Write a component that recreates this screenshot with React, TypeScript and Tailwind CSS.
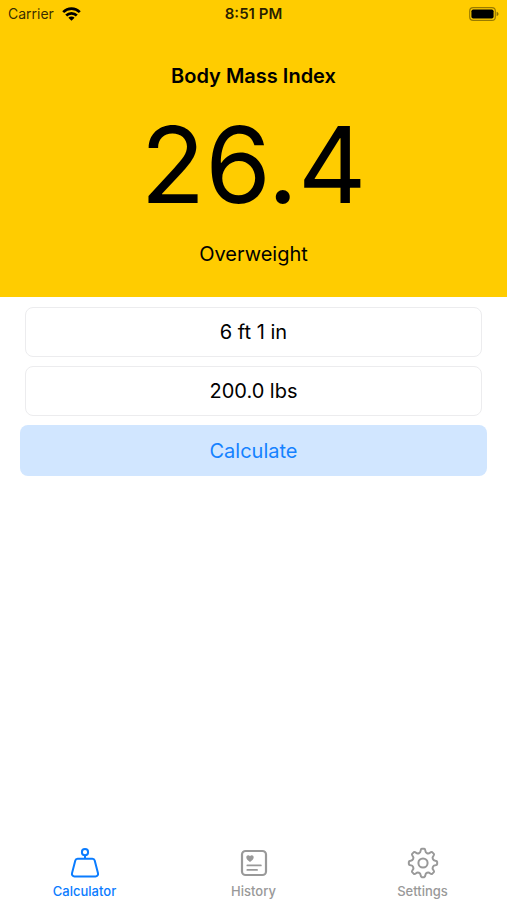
import React, { useState } from 'react';

type TabId = 'calculator' | 'history' | 'settings';

const WifiIcon = () => (
  <svg width="19" height="14" viewBox="0 0 19 14" fill="none" stroke="currentColor" strokeWidth="2.7" aria-hidden="true">
    <path d="M1.2 5.1a11.8 11.8 0 0 1 16.6 0" />
    <path d="M4.2 8.5a7.5 7.5 0 0 1 10.6 0" />
    <path d="M9.5 13.7 6.4 10.7a4.4 4.4 0 0 1 6.2 0Z" fill="currentColor" stroke="none" />
  </svg>
);

const BatteryIcon = () => (
  <svg width="30" height="14" viewBox="0 0 30 14" aria-hidden="true">
    <rect x="0.7" y="0.7" width="25.6" height="12.6" rx="3.4" fill="none" stroke="currentColor" strokeOpacity="0.4" strokeWidth="1.2" />
    <rect x="2.4" y="2.4" width="22.2" height="9.2" rx="1.8" fill="currentColor" />
    <path d="M27.6 4.8c1.2.4 1.9 1.2 1.9 2.2s-.7 1.8-1.9 2.2Z" fill="currentColor" fillOpacity="0.45" />
  </svg>
);

const WeightIcon = () => (
  <svg width="36" height="36" viewBox="0 0 36 36" fill="none" stroke="currentColor" strokeWidth="2" strokeLinejoin="round" aria-hidden="true">
    <circle cx="18" cy="7.2" r="3.1" />
    <path d="M18 10.3v3.4" />
    <path d="M10.6 13.8h14.8a2.4 2.4 0 0 1 2.3 1.8l3.3 12.6a2.6 2.6 0 0 1-2.5 3.3h-21A2.6 2.6 0 0 1 5 28.2l3.3-12.6a2.4 2.4 0 0 1 2.3-1.8Z" />
  </svg>
);

const HistoryIcon = () => (
  <svg width="36" height="36" viewBox="0 0 36 36" fill="none" stroke="currentColor" strokeLinecap="round" aria-hidden="true">
    <rect x="6" y="6" width="24" height="24" rx="3.6" strokeWidth="2.2" />
    <path d="M14 17c-2.3-1.6-3.7-3-3.7-4.7 0-1.2.9-2.1 1.9-2.1.8 0 1.4.4 1.8 1.1.4-.7 1-1.1 1.8-1.1 1 0 1.9.9 1.9 2.1 0 1.7-1.4 3.1-3.7 4.7Z" fill="currentColor" stroke="none" />
    <path d="M11.3 20.4h13.6M11.3 24.9h9.8" strokeWidth="1.7" />
  </svg>
);

// Eight-tooth gear, with the first tooth pointing straight up
const polar = (radius: number, deg: number) => {
  const rad = ((deg - 90) * Math.PI) / 180;
  return `${(18 + radius * Math.cos(rad)).toFixed(2)} ${(18 + radius * Math.sin(rad)).toFixed(2)}`;
};

const gearPath =
  [0, 45, 90, 135, 180, 225, 270, 315]
    .map(
      (a, i) =>
        `${i === 0 ? 'M' : 'L'}${polar(12.4, a - 11)} Q${polar(14.2, a - 9)} ${polar(14.2, a - 5)} L${polar(14.2, a + 5)} Q${polar(14.2, a + 9)} ${polar(12.4, a + 11)} C${polar(10.2, a + 14)} ${polar(10.2, a + 31)} ${polar(12.4, a + 34)}`
    )
    .join(' ') + ' Z';

const GearIcon = () => (
  <svg width="36" height="36" viewBox="0 0 36 36" fill="none" stroke="currentColor" strokeWidth="2" strokeLinejoin="round" aria-hidden="true">
    <path d={gearPath} />
    <circle cx="18" cy="18" r="4.6" />
  </svg>
);

const tabs: { id: TabId; label: string; icon: React.ReactNode }[] = [
  { id: 'calculator', label: 'Calculator', icon: <WeightIcon /> },
  { id: 'history', label: 'History', icon: <HistoryIcon /> },
  { id: 'settings', label: 'Settings', icon: <GearIcon /> },
];

function computeBmi(height: string, weight: string) {
  const [feet = 0, inches = 0] = (height.match(/[\d.]+/g) ?? []).map(Number);
  const total = feet * 12 + inches;
  return total > 0 ? (parseFloat(weight) * 703) / (total * total) : 0;
}

function categoryFor(bmi: number) {
  if (bmi < 18.5) return 'Underweight';
  if (bmi < 25) return 'Normal';
  if (bmi < 30) return 'Overweight';
  return 'Obese';
}

const fieldClass =
  'mx-[5px] h-[50px] rounded-lg border border-[#ececee] bg-white text-center text-xl text-black outline-none focus:border-[#007aff]';

export default function App() {
  const [height, setHeight] = useState('6 ft 1 in');
  const [weight, setWeight] = useState('200.0 lbs');
  const [bmi, setBmi] = useState(() => computeBmi('6 ft 1 in', '200.0 lbs'));
  const [tab, setTab] = useState<TabId>('calculator');

  return (
    <div className="flex min-h-screen flex-col bg-white font-['Inter',sans-serif] text-black">
      <header className="bg-[#ffcc00]">
        {/* Status bar */}
        <div className="grid h-7 grid-cols-3 items-center px-2 text-sm leading-7">
          <div className="flex items-center gap-2 text-black/80">
            <span>Carrier</span>
            <span className="text-black"><WifiIcon /></span>
          </div>
          <span className="text-center text-[15px] font-semibold text-black/85">8:51 PM</span>
          <span className="flex justify-end"><BatteryIcon /></span>
        </div>

        {/* Result */}
        <div className="flex flex-col items-center gap-5 pb-[29px] pt-[34px]">
          <h1 className="text-xl font-semibold leading-7">Body Mass Index</h1>
          <output className="text-[106px] leading-[110px]">{bmi.toFixed(1)}</output>
          <p className="text-xl leading-7">{categoryFor(bmi)}</p>
        </div>
      </header>

      <main className="flex-1 px-5 pt-[10px]">
        <form
          className="flex flex-col gap-[9px]"
          onSubmit={(e) => {
            e.preventDefault();
            setBmi(computeBmi(height, weight));
          }}
        >
          <input aria-label="Height" className={fieldClass} value={height} onChange={(e) => setHeight(e.target.value)} />
          <input aria-label="Weight" className={fieldClass} value={weight} onChange={(e) => setWeight(e.target.value)} />
          <button type="submit" className="h-[51px] cursor-pointer rounded-lg bg-[#d1e6ff] text-xl text-[#1582ff]">
            Calculate
          </button>
        </form>
      </main>

      {/* Tab bar */}
      <nav className="grid grid-cols-3 pb-px">
        {tabs.map((t) => (
          <button
            key={t.id}
            type="button"
            onClick={() => setTab(t.id)}
            aria-current={tab === t.id ? 'page' : undefined}
            className={`flex cursor-pointer flex-col items-center gap-0.5 text-[13px] leading-4 font-medium ${tab === t.id ? 'text-[#0a7cff]' : 'text-[#999999]'}`}
          >
            {t.icon}
            <span>{t.label}</span>
          </button>
        ))}
      </nav>
    </div>
  );
}
